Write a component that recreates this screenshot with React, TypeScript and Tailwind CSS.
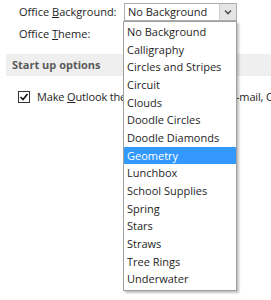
import React from "react";

const themes = [
  "No Background",
  "Calligraphy",
  "Circles and Stripes",
  "Circuit",
  "Clouds",
  "Doodle Circles",
  "Doodle Diamonds",
  "Geometry",
  "Lunchbox",
  "School Supplies",
  "Spring",
  "Stars",
  "Straws",
  "Tree Rings",
  "Underwater",
];

export default function App() {
  const selected = "Geometry";

  return (
    <div
      className="relative w-[271px] h-[300px] overflow-hidden bg-white text-[11px] text-[#1e1e1e]"
      style={{ fontFamily: '"Open Sans", "Noto Sans", sans-serif' }}
    >
      {/* Settings rows */}
      <div className="pl-[19px] pt-[3px]">
        <div className="flex items-center h-[18px]">
          <span className="w-[105px] whitespace-nowrap">
            Office <u>B</u>ackground:
          </span>
          <div className="flex h-[18px] w-[113px] border border-[#adadad] bg-white">
            <span className="flex-1 pl-[3px] leading-[16px] whitespace-nowrap">No Background</span>
            <span className="flex w-[17px] items-center justify-center bg-[#e5e5e5] border-l border-[#cfcfcf]">
              <svg width="8" height="6" viewBox="0 0 8 6">
                <path d="M1 1.5 L4 4.5 L7 1.5" stroke="#555" strokeWidth="1.6" fill="none" />
              </svg>
            </span>
          </div>
        </div>
        <div className="mt-[4px] h-[18px] leading-[18px] whitespace-nowrap">
          Office <u>T</u>heme:
        </div>
      </div>

      <div className="ml-[6px] mt-[11px] h-[22px] bg-[#efefef] pl-[6px] leading-[22px] font-bold text-[#5a5a5a]">
        Start up options
      </div>

      <div className="mt-[13px] flex items-center pl-[18px] whitespace-nowrap">
        <span className="flex h-[12px] w-[12px] items-center justify-center border border-[#333] bg-white">
          <svg width="10" height="10" viewBox="0 0 10 10">
            <path d="M1.5 5 L4 7.5 L8.5 2" stroke="#111" strokeWidth="1.6" fill="none" />
          </svg>
        </span>
        <span className="ml-[7px] tracking-[-0.15px]">
          Make <u>O</u>utlook the default program for E-mail, Contacts and Calendar
        </span>
      </div>

      {/* Open dropdown list */}
      <div className="absolute left-[123px] top-[21px] w-[114px] border border-[#a0a0a0] bg-white pt-[1px] pb-[2px] shadow-[2px_2px_2px_rgba(0,0,0,0.25)]">
        {themes.map((t) => (
          <div
            key={t}
            className={`h-[17.67px] pl-[3px] leading-[17.67px] whitespace-nowrap ${
              t === selected ? "bg-[#3399ff] text-white" : ""
            }`}
          >
            {t}
          </div>
        ))}
      </div>
    </div>
  );
}
